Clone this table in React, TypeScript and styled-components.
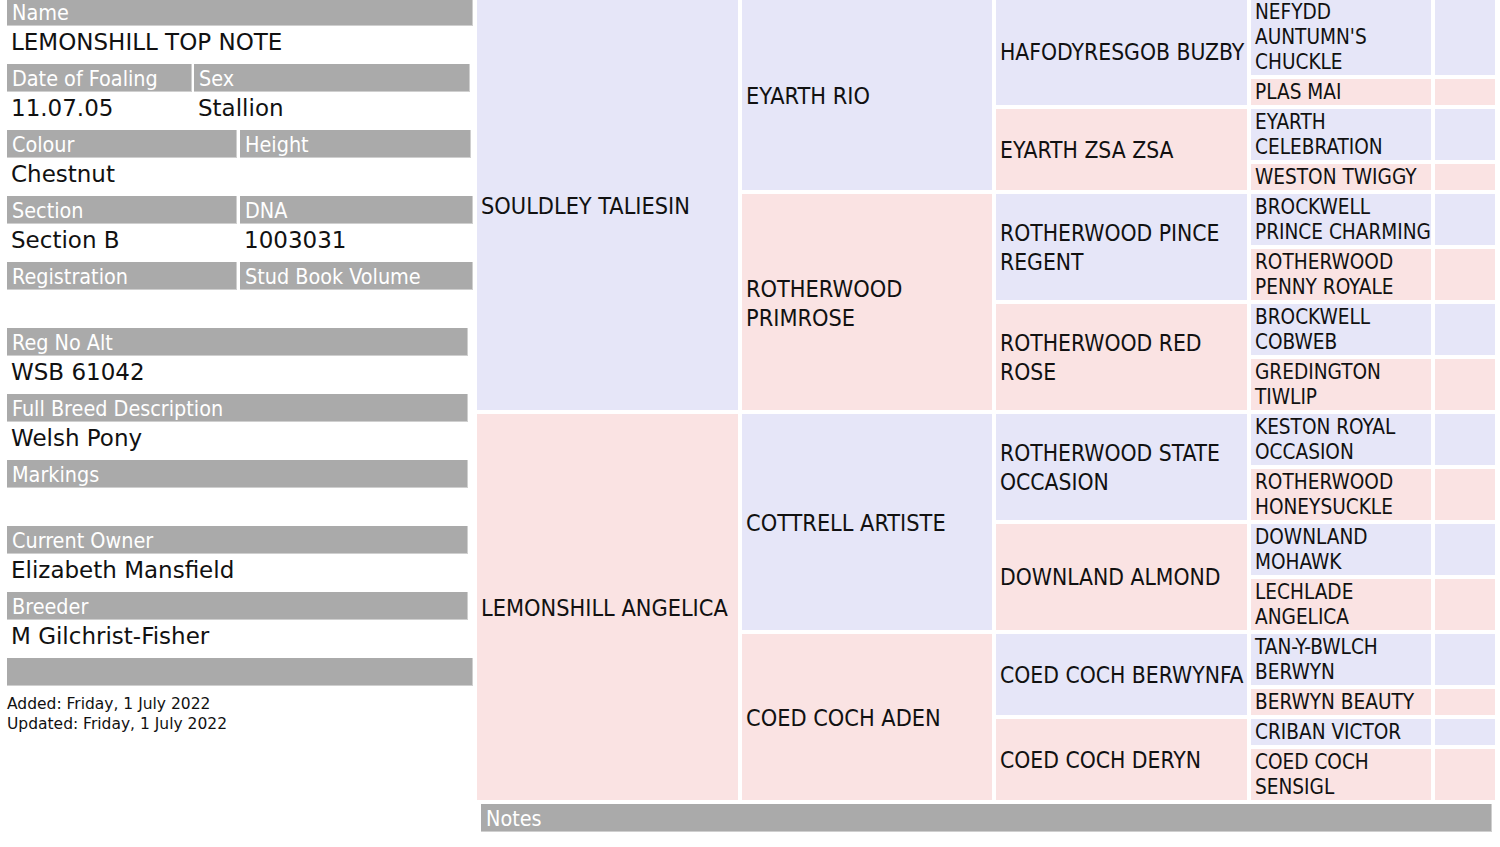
import styled, { createGlobalStyle } from 'styled-components'

/*---> Data <---*/
type Sex = 'm' | 'f'

const pedigree: string[][] = [
  ['SOULDLEY TALIESIN', 'LEMONSHILL ANGELICA'],
  ['EYARTH RIO', 'ROTHERWOOD\nPRIMROSE', 'COTTRELL ARTISTE', 'COED COCH ADEN'],
  [
    'HAFODYRESGOB BUZBY',
    'EYARTH ZSA ZSA',
    'ROTHERWOOD PINCE\nREGENT',
    'ROTHERWOOD RED\nROSE',
    'ROTHERWOOD STATE\nOCCASION',
    'DOWNLAND ALMOND',
    'COED COCH BERWYNFA',
    'COED COCH DERYN',
  ],
  [
    "NEFYDD\nAUNTUMN'S\nCHUCKLE",
    'PLAS MAI',
    'EYARTH\nCELEBRATION',
    'WESTON TWIGGY',
    'BROCKWELL\nPRINCE CHARMING',
    'ROTHERWOOD\nPENNY ROYALE',
    'BROCKWELL\nCOBWEB',
    'GREDINGTON\nTIWLIP',
    'KESTON ROYAL\nOCCASION',
    'ROTHERWOOD\nHONEYSUCKLE',
    'DOWNLAND\nMOHAWK',
    'LECHLADE\nANGELICA',
    'TAN-Y-BWLCH\nBERWYN',
    'BERWYN BEAUTY',
    'CRIBAN VICTOR',
    'COED COCH\nSENSIGL',
  ],
  Array(16).fill(''),
]

// font size and line height per generation column
const genFont = [
  { size: 23.3, line: 29 },
  { size: 23.3, line: 29 },
  { size: 22.7, line: 29 },
  { size: 20.6, line: 25 },
  { size: 20.6, line: 25 },
]

/*---> Components <---*/
const Field = ({
  label,
  value,
  width,
}: {
  label: string
  value?: string
  width: number
}) => (
  <FieldBox $width={width}>
    <Label>{label}</Label>
    <Value>{value}</Value>
  </FieldBox>
)

const App = () => {
  return (
    <>
      <GlobalStyle />
      <Page>
        <Sidebar>
          <Field label='Name' value='LEMONSHILL TOP NOTE' width={466} />
          <Pair $gap={2}>
            <Field label='Date of Foaling' value='11.07.05' width={185} />
            <Field label='Sex' value='Stallion' width={276} />
          </Pair>
          <Pair $gap={3}>
            <Field label='Colour' value='Chestnut' width={230} />
            <Field label='Height' width={231} />
          </Pair>
          <Pair $gap={3}>
            <Field label='Section' value='Section B' width={230} />
            <Field label='DNA' value='1003031' width={233} />
          </Pair>
          <Pair $gap={3}>
            <Field label='Registration' width={230} />
            <Field label='Stud Book Volume' width={233} />
          </Pair>
          <Field label='Reg No Alt' value='WSB 61042' width={461} />
          <Field label='Full Breed Description' value='Welsh Pony' width={461} />
          <Field label='Markings' width={461} />
          <Field label='Current Owner' value='Elizabeth Mansfield' width={461} />
          <Field label='Breeder' value='M Gilchrist-Fisher' width={461} />
          <BlankBar />
          <Stamp>
            Added: Friday, 1 July 2022
            <br />
            Updated: Friday, 1 July 2022
          </Stamp>
        </Sidebar>
        <Main>
          <Pedigree>
            {pedigree.map((gen, g) => {
              const span = g < 4 ? 16 / 2 ** (g + 1) : 1
              return gen.map((name, i) => (
                <Cell
                  key={`${g}-${i}`}
                  $col={g + 1}
                  $row={i * span + 1}
                  $span={span}
                  $size={genFont[g].size}
                  $line={genFont[g].line}
                  $sex={(i % 2 === 0 ? 'm' : 'f') as Sex}
                >
                  {name}
                </Cell>
              ))
            })}
          </Pedigree>
          <NotesBar>Notes</NotesBar>
        </Main>
      </Page>
    </>
  )
}

/*---> Styles <---*/
const GlobalStyle = createGlobalStyle`
  body {
    margin: 0;
    background: #ffffff;
    color: #111111;
    font-family: "DejaVu Sans", Verdana, sans-serif;
  }
`

const Page = styled.div`
  display: flex;
  align-items: flex-start;
  margin-top: -2px;
`

const Sidebar = styled.aside`
  flex: none;
  width: 466px;
  margin-left: 7px;
`

const Pair = styled.div<{ $gap: number }>`
  display: flex;
  gap: ${(p) => p.$gap}px;
`

const FieldBox = styled.div<{ $width: number }>`
  width: ${(p) => p.$width}px;
`

const Label = styled.div`
  box-sizing: border-box;
  height: 28px;
  padding: 2px 0 0 5px;
  background: #aaaaaa;
  border-bottom: 1px solid #cfcfcf;
  border-right: 1px solid #cfcfcf;
  color: #ffffff;
  font-family: "DejaVu Sans Condensed", "DejaVu Sans", sans-serif;
  font-size: 21.4px;
  line-height: 26px;
  white-space: nowrap;
`

const Value = styled.div`
  box-sizing: border-box;
  height: 38px;
  padding: 3px 4px 0;
  font-size: 23px;
  line-height: 27px;
  white-space: nowrap;
`

const BlankBar = styled(Label)`
  width: 466px;
`

const Stamp = styled.div`
  margin-top: 8px;
  font-size: 15.5px;
  line-height: 20px;
`

const Main = styled.main`
  flex: none;
  margin-left: 4px;
  display: flex;
  flex-direction: column;
`

const Pedigree = styled.div`
  display: grid;
  grid-template-columns: 261px 250px 251px 180px 60px;
  grid-auto-rows: auto;
  gap: 4px;
  margin-top: 1px;
`

const Cell = styled.div<{
  $col: number
  $row: number
  $span: number
  $size: number
  $line: number
  $sex: Sex
}>`
  grid-column: ${(p) => p.$col};
  grid-row: ${(p) => p.$row} / span ${(p) => p.$span};
  display: flex;
  align-items: center;
  min-height: 25px;
  padding: 1px 0 0 4px;
  background: ${(p) => (p.$sex === 'm' ? '#e6e6f8' : '#fae3e3')};
  font-family: "DejaVu Sans Condensed", "DejaVu Sans", sans-serif;
  font-size: ${(p) => p.$size}px;
  line-height: ${(p) => p.$line}px;
  white-space: pre;
  overflow: hidden;
`

const NotesBar = styled(Label)`
  width: 1011px;
  margin: 4px 0 0 4px;
`

export default App
